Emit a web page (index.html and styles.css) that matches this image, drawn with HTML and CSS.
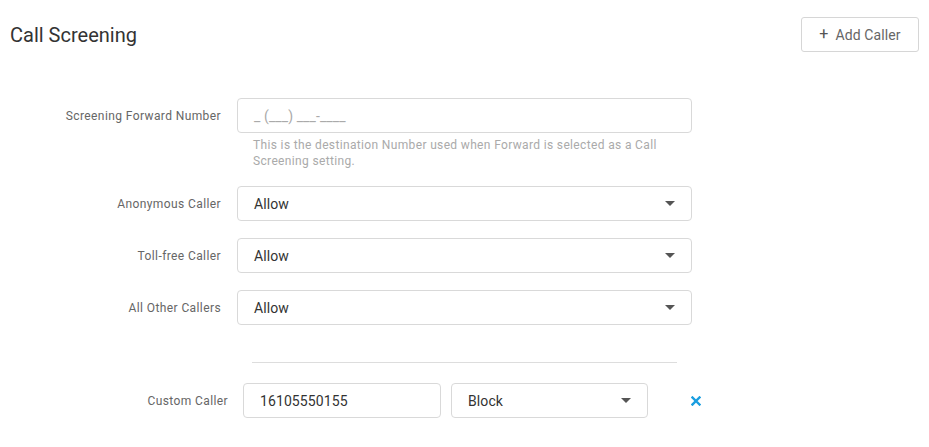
FILE: index.html
```html
<!DOCTYPE html>
<html>
<head>
<meta charset="utf-8">
<link rel="stylesheet" href="styles.css">
</head>
<body>
<div class="page">
  <div class="header">
    <h1 class="title">Call Screening</h1>
    <button class="btn-add"><span class="plus">+</span>Add Caller</button>
  </div>
  <div class="form">
    <div class="row">
      <label class="label">Screening Forward Number</label>
      <div class="field">
        <div class="input placeholder">_ (___) ___-____</div>
        <div class="help">This is the destination Number used when Forward is selected as a Call Screening setting.</div>
      </div>
    </div>
    <div class="row">
      <label class="label">Anonymous Caller</label>
      <div class="field">
        <div class="input select"><span>Allow</span><span class="caret"></span></div>
      </div>
    </div>
    <div class="row">
      <label class="label">Toll-free Caller</label>
      <div class="field">
        <div class="input select"><span>Allow</span><span class="caret"></span></div>
      </div>
    </div>
    <div class="row">
      <label class="label">All Other Callers</label>
      <div class="field">
        <div class="input select"><span>Allow</span><span class="caret"></span></div>
      </div>
    </div>
    <div class="divider"></div>
    <div class="custom-row">
      <label class="label custom-label">Custom Caller</label>
      <div class="input small">16105550155</div>
      <div class="input small select"><span>Block</span><span class="caret"></span></div>
      <svg class="remove" width="10" height="10" viewBox="0 0 10 10"><path d="M1.5 1.5 L8.5 8.5 M8.5 1.5 L1.5 8.5" stroke="#1a9ee0" stroke-width="2.4" stroke-linecap="square"/></svg>
    </div>
  </div>
</div>
</body>
</html>
```

FILE: styles.css
```css
* { box-sizing: border-box; }
html, body { margin: 0; padding: 0; background: #fff; }
body { font-family: Roboto, "Noto Sans", Arial, sans-serif; color: #333; }
.page { padding: 17px 10px 0 10px; }
.header { display: flex; justify-content: space-between; align-items: center; height: 35px; }
.title { margin: 0; font-size: 20px; font-weight: 400; color: #333; }
.btn-add {
  height: 35px; width: 118px; border: 1px solid #d6d6d6; border-radius: 3px; background: #fff;
  font-family: Roboto, Arial, sans-serif; font-size: 14px; color: #666; padding: 0;
  display: flex; align-items: center; justify-content: center; letter-spacing: 0.1px;
}
.plus { font-size: 16px; margin-right: 7px; color: #555; line-height: 1; position: relative; top: -1px; }
.form { margin-top: 46px; }
.row { display: flex; align-items: flex-start; margin-bottom: 17px; }
.label { width: 211px; height: 35px; text-align: right; font-size: 12px; color: #666; line-height: 37px; flex: none; letter-spacing: 0.4px; }
.field { margin-left: 16px; width: 455px; }
.input {
  height: 35px; border: 1px solid #d9d9d9; border-radius: 4px; padding: 0 16px;
  display: flex; align-items: center; font-size: 14px; color: #333; letter-spacing: 0.1px;
}
.placeholder { color: #aaa; }
.select { justify-content: space-between; padding-right: 16px; }
.caret { width: 0; height: 0; border-left: 5.5px solid transparent; border-right: 5.5px solid transparent; border-top: 5px solid #555; }
.help { margin-top: 4px; padding-left: 16px; padding-right: 16px; font-size: 12px; line-height: 16px; color: #aaa; letter-spacing: 0.35px; }
.divider { margin: 37px 0 20px 242px; width: 425px; height: 1px; background: #ddd; }
.custom-row { display: flex; align-items: center; }
.custom-label { width: 218px; }
.input.small { margin-left: 15px; width: 198px; }
.input.small.select { margin-left: 10px; width: 197px; }
.remove { margin-left: 43px; display: block; }
```
